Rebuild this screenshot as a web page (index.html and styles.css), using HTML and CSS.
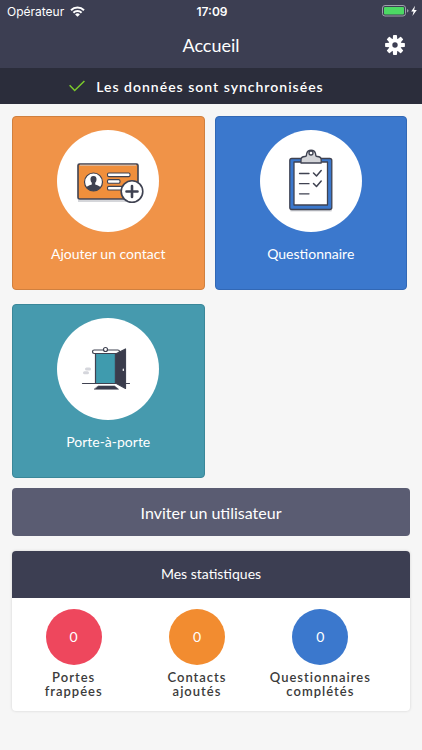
FILE: index.html
```html
<!DOCTYPE html>
<html lang="fr">
<head>
    <meta charset="UTF-8">
    <meta name="viewport" content="width=device-width, initial-scale=1.0">
    <title>Accueil</title>
    <link rel="stylesheet" href="styles.css">
</head>
<body>
    <header class="header">
        <div class="status-bar">
            <div class="carrier">
                <span>Opérateur</span>
                <svg width="15" height="11" viewBox="0 0 15 11" fill="none" stroke="#fff" stroke-width="2">
                    <path d="M1 4.2a9.3 9.3 0 0 1 13 0M3.4 6.7a5.9 5.9 0 0 1 8.2 0"/>
                    <path d="M7.5 10.8 5.1 8.4a3.5 3.5 0 0 1 4.8 0z" fill="#fff" stroke="none"/>
                </svg>
            </div>
            <time class="clock">17:09</time>
            <div class="battery">
                <svg width="35" height="12" viewBox="0 0 35 12">
                    <rect x=".5" y=".5" width="23" height="10.5" rx="2.5" fill="none" stroke="#9d9faa"/>
                    <rect x="2" y="2" width="20" height="7.5" rx="1" fill="#4cd964"/>
                    <path d="M25 4v3.5q1.5-.4 1.5-1.75T25 4z" fill="#9d9faa"/>
                    <path d="M33 .8 29.2 6.4h2.4L30.4 11l4.4-6h-2.6z" fill="#fff"/>
                </svg>
            </div>
        </div>
        <nav class="navbar">
            <h1 class="title">Accueil</h1>
            <button type="button" class="settings-btn" aria-label="Réglages">
                <svg width="20" height="20" viewBox="-10 -10 20 20">
                    <g fill="#fff">
                        <circle r="6.4"/>
                        <path id="tooth" d="M-2.3-5-2-9.3q.1-.6.7-.6h2.6q.6 0 .7.6L2.3-5z"/>
                        <use href="#tooth" transform="rotate(45)"/>
                        <use href="#tooth" transform="rotate(90)"/>
                        <use href="#tooth" transform="rotate(135)"/>
                        <use href="#tooth" transform="rotate(180)"/>
                        <use href="#tooth" transform="rotate(225)"/>
                        <use href="#tooth" transform="rotate(270)"/>
                        <use href="#tooth" transform="rotate(315)"/>
                    </g>
                    <circle r="2.7" fill="#3c3e52"/>
                </svg>
            </button>
        </nav>
    </header>

    <div class="sync-bar">
        <svg width="16" height="12" viewBox="0 0 16 12" fill="none" stroke="#7ccb2c" stroke-width="1.5">
            <path d="M.6 5.2 5.7 10.5 15.4 1"/>
        </svg>
        <span>Les données sont synchronisées</span>
    </div>

    <main class="content">
        <div class="tiles">
            <button type="button" class="tile tile-contact">
                <span class="tile-icon">
                    <svg width="102" height="102" viewBox="0 0 102 102" fill="none" stroke="#3f4251" stroke-width="1.6">
                        <path d="M21 70h48v2H21z" fill="#d5d6da" stroke="none"/>
                        <rect x="21" y="34" width="60" height="35" rx="1.5" fill="#f08f3c"/>
                        <path d="M23 35.2h56" stroke="#cfc5c0" stroke-width="1"/>
                        <circle cx="36.5" cy="52" r="9" fill="#fff" stroke-width="1.2"/>
                        <path d="M36.5 46c-2.4 0-3.2 1.7-3 3.7.1 1.7.8 2.4 1.3 3.1v1.6c-1.7 1-4.8 1-5.3 3.2a9 9 0 0 0 14 0c-.5-2.2-3.6-2.2-5.3-3.2v-1.6c.5-.7 1.2-1.4 1.3-3.1.2-2-.6-3.7-3-3.7z" fill="#3f4251" stroke="none"/>
                        <g fill="#fff" stroke-width="1.1">
                            <rect x="50.5" y="43" width="22.5" height="3.6" rx="1.3"/>
                            <rect x="50.5" y="49.6" width="12.5" height="3.6" rx="1.3"/>
                            <rect x="50.5" y="56.4" width="19" height="3.6" rx="1.3"/>
                        </g>
                        <circle cx="75" cy="61.5" r="10.8" fill="#fff"/>
                        <path d="M75 56v11M69.5 61.5h11" stroke-width="2.6" stroke-linecap="round"/>
                    </svg>
                </span>
                <span class="tile-label">Ajouter un contact</span>
            </button>

            <button type="button" class="tile tile-survey">
                <span class="tile-icon">
                    <svg width="102" height="102" viewBox="0 0 102 102" fill="none" stroke="#3f4251" stroke-width="1.3" stroke-linecap="round" stroke-linejoin="round">
                        <path d="M31 80.5h40" stroke="#d5d6da" stroke-width="2"/>
                        <rect x="29.8" y="28.5" width="42" height="51" rx="2" fill="#3b78cd"/>
                        <path d="M34 32h33.5v43H34z" fill="#fff"/>
                        <path d="M41 33v-3q0-3.5 4-3.5 1.6 0 1.6-2.6a4.6 4.6 0 0 1 9 0q0 2.6 1.6 2.6 4 0 4 3.5v3z" fill="#d3d4d8"/>
                        <circle cx="51" cy="23" r="2" fill="#fff"/>
                        <path d="M39.5 43.5h9.5M39.5 53.7h9.5M39.5 63.8h9.5"/>
                        <path d="m53.5 43 3 3 4.7-5.5M53.5 53.5l3 3 4.7-5.5" stroke-width="1.5"/>
                    </svg>
                </span>
                <span class="tile-label">Questionnaire</span>
            </button>

            <button type="button" class="tile tile-door">
                <span class="tile-icon">
                    <svg width="102" height="102" viewBox="0 0 102 102" fill="none" stroke="#3f4251" stroke-width="1.2" stroke-linecap="round" stroke-linejoin="round">
                        <path d="M29.5 51h3M27.5 54.7h3" stroke="#d5d6dc" stroke-width="3"/>
                        <path d="M25.5 65.5h47"/>
                        <path d="M38.5 35h20v30.5h-20z" fill="#3f9bae"/>
                        <rect x="35.5" y="32" width="27" height="3.5" rx="1.7" fill="#fff"/>
                        <circle cx="48.5" cy="31.5" r="2" fill="#fff"/>
                        <path d="M58.5 36 68.500 31v39.5l-10-5.5z" fill="#3a3c4c"/>
                        <path d="M41.5 68h16l4 3.2h-24z" fill="#3a3c4c" stroke-width=".6"/>
                        <path d="M66.3 51v1.5" stroke="#fff"/>
                    </svg>
                </span>
                <span class="tile-label">Porte-à-porte</span>
            </button>
        </div>

        <button type="button" class="invite-btn">Inviter un utilisateur</button>

        <section class="stats">
            <h2 class="stats-title">Mes statistiques</h2>
            <div class="stats-list">
                <div class="stat">
                    <div class="stat-value red">0</div>
                    <div class="stat-label">Portes<br>frappées</div>
                </div>
                <div class="stat">
                    <div class="stat-value orange">0</div>
                    <div class="stat-label">Contacts<br>ajoutés</div>
                </div>
                <div class="stat">
                    <div class="stat-value blue">0</div>
                    <div class="stat-label">Questionnaires<br>complétés</div>
                </div>
            </div>
        </section>
    </main>
</body>
</html>
```

FILE: styles.css
```css
* { margin: 0; padding: 0; box-sizing: border-box; }
body {
    background: #f6f6f6;
    color: #3b3b3b;
    font-family: Lato, sans-serif;
    min-height: 100vh;
}
button {
    font-family: inherit;
    color: #fff;
    border: none;
    cursor: pointer;
}
svg {
    display: block;
}

/* Header */
.header {
    background: #3c3e52;
    color: #fff;
}
.status-bar {
    display: grid;
    grid-template-columns: 1fr auto 1fr;
    align-items: center;
    height: 22px;
    padding: 0 5px 0 7px;
    font-family: Inter, sans-serif;
    font-size: 12px;
}
.carrier {
    display: flex;
    align-items: center;
    gap: 6px;
}
.clock {
    font-weight: 600;
}
.battery {
    justify-self: end;
}
.navbar {
    display: grid;
    grid-template-columns: 1fr auto 1fr;
    align-items: center;
    height: 46px;
    padding: 0 17px;
}
.title {
    grid-column: 2;
    font-size: 18px;
    font-weight: 400;
}
.settings-btn {
    justify-self: end;
    background: none;
}

/* Sync bar */
.sync-bar {
    display: flex;
    align-items: center;
    justify-content: center;
    gap: 11px;
    height: 36px;
    padding-right: 29px;
    background: #2b2d3b;
    color: #fff;
    font-size: 14px;
    font-weight: 600;
    letter-spacing: 1px;
}

/* Tiles */
.content {
    padding: 12px;
}
.tiles {
    display: grid;
    grid-template-columns: 1fr 1fr;
    gap: 14px 10px;
    padding-right: 3px;
}
.tile {
    display: flex;
    flex-direction: column;
    align-items: center;
    gap: 12px;
    height: 174px;
    padding-top: 13px;
    border: 1px solid;
    border-radius: 4px;
}
.tile-contact {
    background: #f09348;
    border-color: #d0803f;
}
.tile-survey {
    background: #3b78cd;
    border-color: #3268b5;
}
.tile-door {
    background: #469aae;
    border-color: #3a8799;
}
.tile-icon {
    background: #fff;
    border-radius: 50%;
}
.tile-label {
    font-size: 14px;
    line-height: 20px;
}

.invite-btn {
    display: block;
    width: 100%;
    height: 48px;
    margin: 10px 0 15px;
    background: #5a5c72;
    border-radius: 4px;
    font-size: 16px;
}

/* Stats */
.stats {
    background: #fff;
    border-radius: 4px;
    box-shadow: 0 0 3px rgba(0, 0, 0, 0.15);
    overflow: hidden;
}
.stats-title {
    background: #3c3e52;
    color: #fff;
    font-size: 14px;
    font-weight: 400;
    line-height: 46px;
    padding-bottom: 1px;
    text-align: center;
}
.stats-list {
    display: grid;
    grid-template-columns: repeat(3, 1fr);
    padding: 11px 28px 13px 0;
}
.stat {
    display: flex;
    flex-direction: column;
    align-items: center;
    gap: 5px;
}
.stat-value {
    width: 56px;
    height: 56px;
    border-radius: 50%;
    color: #fff;
    font-size: 14px;
    line-height: 56px;
    text-align: center;
}
.red { background: #ee475d; }
.orange { background: #f28c30; }
.blue { background: #3b78cd; }
.stat-label {
    font-size: 13px;
    font-weight: 600;
    line-height: 14px;
    letter-spacing: 1px;
    text-align: center;
}
```
